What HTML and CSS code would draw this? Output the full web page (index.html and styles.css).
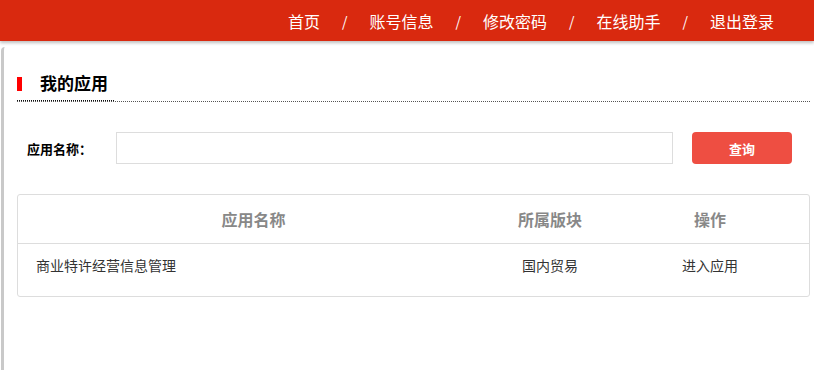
FILE: index.html
```html
<!DOCTYPE html>
<html lang="zh-CN">
<head>
  <meta charset="UTF-8" />
  <title>我的应用</title>
  <link rel="stylesheet" href="styles.css">
</head>
<body>
  <div class="topbar">
    <a href="#">首页</a><span class="sep">/</span>
    <a href="#">账号信息</a><span class="sep">/</span>
    <a href="#">修改密码</a><span class="sep">/</span>
    <a href="#">在线助手</a><span class="sep">/</span>
    <a href="#">退出登录</a>
  </div>

  <div class="main">
    <div class="title-row">
      <span class="title"><i class="mark"></i>我的应用</span>
    </div>

    <div class="search">
      <label>应用名称：</label>
      <input type="text" />
      <button>查询</button>
    </div>

    <div class="table-box">
      <table>
        <thead>
          <tr>
            <th class="col-name">应用名称</th>
            <th class="col-part">所属版块</th>
            <th class="col-op">操作</th>
          </tr>
        </thead>
        <tbody>
          <tr>
            <td class="left">商业特许经营信息管理</td>
            <td>国内贸易</td>
            <td><a href="#">进入应用</a></td>
          </tr>
        </tbody>
      </table>
    </div>
  </div>
</body>
</html>
```

FILE: styles.css
```css
body {
  margin: 0;
  font-family: "Noto Sans CJK SC", "Microsoft YaHei", sans-serif;
  background: #fff;
  color: #333;
  overflow: hidden;
}
.topbar {
  height: 41px;
  background: #d9290f;
  box-shadow: 0 2px 3px rgba(0, 0, 0, 0.25);
  display: flex;
  justify-content: flex-end;
  align-items: center;
  padding-right: 40px;
}
.topbar a {
  color: #fff;
  text-decoration: none;
  font-size: 16px;
  line-height: 40px;
}
.topbar .sep {
  color: #fff;
  font-size: 14px;
  margin: 0 22px;
}
.main {
  box-sizing: border-box;
  height: calc(100vh - 47px);
  margin: 6px 0 0 1px;
  border-left: 3px solid #c9c9c9;
  border-top-left-radius: 4px;
  padding: 23px 4px 0 13px;
}
.title-row {
  border-bottom: 1px dotted #555;
  height: 31px;
}
.title {
  display: inline-block;
  height: 30px;
  border-bottom: 1px dotted #111;
  font-size: 17px;
  font-weight: bold;
  color: #000;
  line-height: 25px;
  padding-right: 6px;
}
.mark {
  display: inline-block;
  width: 5px;
  height: 14px;
  background: #f00;
  margin-right: 18px;
  vertical-align: -1px;
}
.search {
  display: flex;
  align-items: center;
  margin-top: 30px;
  padding-left: 10px;
  padding-right: 18px;
}
.search label {
  width: 89px;
  font-size: 13px;
  font-weight: bold;
  color: #000;
}
.search input {
  flex: 1;
  height: 30px;
  border: 1px solid #ddd;
  padding: 0 8px;
  margin: 0;
}
.search button {
  width: 100px;
  height: 32px;
  margin-left: 19px;
  background: #ee4e42;
  color: #fff;
  border: none;
  border-radius: 4px;
  font-family: inherit;
  font-size: 13px;
  font-weight: bold;
  cursor: pointer;
}
.table-box {
  margin-top: 30px;
  border: 1px solid #ddd;
  border-radius: 3px;
}
table {
  width: 100%;
  border-collapse: collapse;
}
th,
td {
  padding: 0;
}
th {
  height: 48px;
  font-size: 16px;
  color: #888;
  font-weight: bold;
  border-bottom: 1px solid #ddd;
}
td {
  height: 42px;
  padding-bottom: 10px;
  font-size: 14px;
  text-align: center;
  color: #333;
}
td.left {
  text-align: left;
  padding-left: 18px;
}
td a {
  color: #333;
  text-decoration: none;
}
.col-name {
  width: 471px;
}
.col-part {
  width: 122px;
}
```
